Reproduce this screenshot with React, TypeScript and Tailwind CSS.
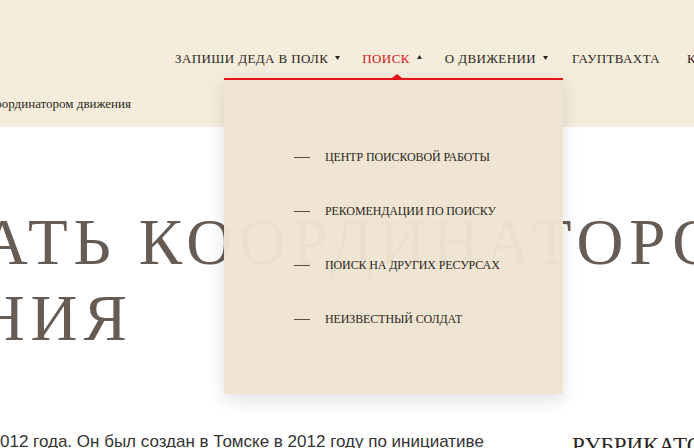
import React from "react";

const serif = { fontFamily: '"Liberation Serif", "DejaVu Serif", serif' };

function Caret({ up = false, className = "" }: { up?: boolean; className?: string }) {
    return (
        <svg width="5" height="4" viewBox="0 0 5 4" className={className}>
            {up ? <path d="M0 4 L2.5 0 L5 4 Z" fill="currentColor" /> : <path d="M0 0 L5 0 L2.5 4 Z" fill="currentColor" />}
        </svg>
    );
}

const menuItems = [
    "Центр поисковой работы",
    "Рекомендации по поиску",
    "Поиск на других ресурсах",
    "Неизвестный солдат",
];

export default function App() {
    return (
        <div className="relative w-[694px] h-[448px] overflow-hidden bg-white" style={serif}>
            {/* Header band */}
            <header className="h-[127px] bg-[#f5ecdc]">
                <nav className="flex items-center pl-[175px] pt-[49px] text-[13px] tracking-[0.03em] text-[#2b2622] whitespace-nowrap">
                    <div className="flex items-center gap-[7px]">
                        <span>ЗАПИШИ ДЕДА В ПОЛК</span>
                        <Caret className="mb-[2px]" />
                    </div>
                    <div className="flex items-center gap-[7px] ml-[22px] text-[#d7141a]">
                        <span>ПОИСК</span>
                        <Caret up className="mb-[3px] text-[#2b2622]" />
                    </div>
                    <div className="flex items-center gap-[7px] ml-[23px]">
                        <span>О ДВИЖЕНИИ</span>
                        <Caret className="mb-[2px]" />
                    </div>
                    <div className="ml-[24px]">ГАУПТВАХТА</div>
                    <div className="ml-[27px]">КОНТАКТЫ</div>
                </nav>
                <div className="mt-[25px] w-[131px] flex justify-end text-[13px] text-[#2b2622] whitespace-nowrap">
                    <span>Стать координатором движения</span>
                </div>
            </header>

            {/* Main */}
            <main className="relative">
                <h1 className="mt-[77px] -ml-[284px] text-[65px] leading-[76px] tracking-[0.09em] text-[#675c53] whitespace-nowrap">
                    КАК СТАТЬ КООРДИНАТОРОМ
                    <br />
                    ДВИЖЕНИЯ
                </h1>
                <div className="flex mt-[73px]">
                    <p
                        className="w-[560px] shrink-0 text-[17px] text-[#333] whitespace-nowrap"
                        style={{ fontFamily: '"Liberation Sans Narrow", "Liberation Sans", sans-serif' }}
                    >
                        012 года. Он был создан в Томске в 2012 году по инициативе
                    </p>
                    <div className="ml-[12px] shrink-0 text-[23px] text-[#2b2622] whitespace-nowrap">РУБРИКАТОР</div>
                </div>
            </main>

            {/* Dropdown */}
            <div className="absolute left-[224px] top-[78px] w-[339px] h-[316px] bg-[#f0e4d2]/[0.97] border-t-2 border-[#e3141a] shadow-[0_6px_18px_rgba(0,0,0,0.12)]">
                <div className="absolute left-1/2 -top-[6px] ml-[-2px] w-0 h-0 border-l-[5px] border-r-[5px] border-b-[4px] border-l-transparent border-r-transparent border-b-[#e3141a]" />
                <ul className="pt-[68px] pl-[70px] flex flex-col gap-[36px]">
                    {menuItems.map((item) => (
                        <li key={item} className="flex items-center h-[18px] text-[12px] tracking-[-0.01em] text-[#2b2622] uppercase">
                            <span className="w-[16px] h-px bg-[#5a5048] mr-[15px]" />
                            {item}
                        </li>
                    ))}
                </ul>
            </div>
        </div>
    );
}
